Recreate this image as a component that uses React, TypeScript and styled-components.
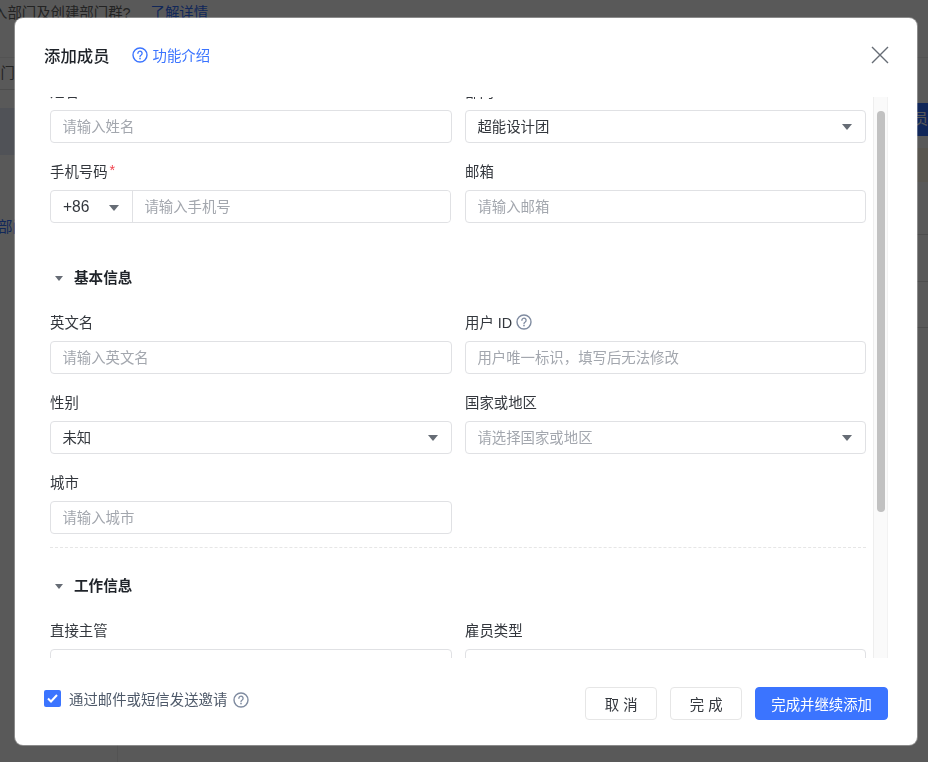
import React from 'react';
import styled, {createGlobalStyle} from 'styled-components';

const GlobalStyle = createGlobalStyle`
  html, body {
    margin: 0;
    padding: 0;
    height: 100%;
    overflow: hidden;
    font-family: "Liberation Sans", "Noto Sans CJK SC", sans-serif;
    font-size: 14.4px;
    color: #333;
  }
  * { box-sizing: border-box; }
`;

/* the page behind the dialog */
const Page = styled.div`
  height: 100vh;
  overflow: hidden;
  background: white;
  color: #666;
  display: flex;
  flex-direction: column;
`;
const Notice = styled.div`
  flex: none;
  height: 58px;
  padding: 3px 0 0 0;
  margin-left: -7px;
  line-height: 20px;
  border-bottom: 1px solid #eee;
  display: flex;
  gap: 20px;
  white-space: nowrap;
  > a { color: #3370ff; }
`;
const PageBody = styled.div`
  flex: 1;
  display: flex;
  min-height: 0;
`;
const Sidebar = styled.div`
  flex: none;
  width: 118px;
  border-right: 1px solid #eee;
`;
const SideSearch = styled.div`
  height: 32px;
  line-height: 31px;
  margin-left: -14px;
  border-bottom: 1px solid #ddd;
`;
const SideActive = styled.div`
  height: 47px;
  margin-top: 18px;
  background: #e6ecfa;
`;
const SideLink = styled.div`
  margin: 62px 0 0 -2px;
  line-height: 20px;
  color: #3370ff;
`;
const MainPane = styled.div`
  flex: 1;
  display: flex;
  flex-direction: column;
`;
const AddButton = styled.div`
  align-self: flex-end;
  margin-top: 45px;
  height: 33px;
  width: 90px;
  line-height: 33px;
  text-align: right;
  background: #3370ff;
  color: white;
`;
const Banner = styled.div`
  height: 34px;
  margin-top: 12px;
  background: #fff6e5;
`;
const TableRow = styled.div<{$h: number}>`
  height: ${p => p.$h}px;
  border-bottom: 1px solid #ddd;
`;

/* dialog */
const Mask = styled.div`
  position: fixed;
  inset: 0;
  background: rgba(0, 0, 0, .65);
  padding: 18px 0 0 15px;
`;
const Dialog = styled.div`
  width: 902px;
  height: 727px;
  background: white;
  border-radius: 8px;
  box-shadow: 0 0 0 1px rgba(255, 255, 255, .3);
  display: flex;
  flex-direction: column;
`;
const Header = styled.div`
  flex: none;
  height: 79px;
  padding: 0 28px 6px 29px;
  display: flex;
  align-items: center;
`;
const Title = styled.h3`
  margin: 0;
  font-size: 16.4px;
  font-weight: 500;
  color: #1f2329;
`;
const Intro = styled.a`
  margin-left: 22px;
  display: flex;
  align-items: center;
  gap: 5px;
  color: #3b74ff;
`;
const CloseButton = styled.button`
  margin-left: auto;
  padding: 0;
  border: none;
  background: none;
  display: flex;
  color: #666c75;
`;
const Scroller = styled.div`
  flex: none;
  height: 561px;
  margin: 0 29px 0 35px;
  display: flex;
  overflow: hidden;
`;
const Content = styled.div`
  width: 816px;
  margin-top: -16px;
`;
const Track = styled.div`
  flex: none;
  width: 15px;
  margin-left: 7px;
  background: #fafafa;
  border-left: 1px solid #eee;
  border-right: 1px solid #f2f2f2;
  padding: 14px 0 0 3px;
`;
const Thumb = styled.div`
  width: 8px;
  height: 401px;
  border-radius: 4px;
  background: #c1c1c1;
`;
const FormGrid = styled.div`
  display: grid;
  grid-template-columns: 402px 401px;
  column-gap: 13px;
  row-gap: 18px;
`;
const Field = styled.div``;
const Label = styled.label`
  height: 20px;
  margin-bottom: 9px;
  padding-top: 2px;
  display: flex;
  align-items: center;
  gap: 4px;
  line-height: 18px;
  color: #33373d;
  > em {
    margin: -5px 0 0 -2px;
    font-style: normal;
    color: #f0414c;
  }
`;
const LabelHelp = styled.span`
  display: flex;
  margin-top: -2px;
`;
const TextInput = styled.input`
  display: block;
  width: 100%;
  height: 33px;
  padding: 0 11.4px;
  border: 1px solid #e0e1e4;
  border-radius: 4px;
  outline: none;
  font: inherit;
  color: #33373d;
  &::placeholder { color: #a3a7ae; }
`;
const Select = styled.div`
  height: 33px;
  padding: 0 13px 2px 11.4px;
  border: 1px solid #e0e1e4;
  border-radius: 4px;
  display: flex;
  align-items: center;
  justify-content: space-between;
  color: #33373d;
`;
const Placeholder = styled.span`
  color: #a3a7ae;
`;
const Caret = styled.i<{$w?: number}>`
  flex: none;
  width: 0;
  height: 0;
  margin-top: 2px;
  border-top: 6px solid #666c75;
  border-left: ${p => p.$w ?? 5.5}px solid transparent;
  border-right: ${p => p.$w ?? 5.5}px solid transparent;
`;
const PhoneBox = styled.div`
  width: 401px;
  height: 33px;
  border: 1px solid #e0e1e4;
  border-radius: 4px;
  display: flex;
`;
const PhonePrefix = styled.div`
  flex: none;
  width: 82px;
  padding: 0 13px 0 12px;
  border-right: 1px solid #e0e1e4;
  display: flex;
  align-items: center;
  justify-content: space-between;
  font-size: 15.6px;
  color: #33373d;
`;
const PhoneInput = styled(TextInput)`
  flex: 1;
  width: auto;
  height: 31px;
  border: none;
`;
const SectionTitle = styled.div<{$top: number}>`
  height: 20px;
  margin: ${p => p.$top}px 0 24px;
  padding-left: 5px;
  display: flex;
  align-items: center;
  gap: 11px;
  line-height: 20px;
  font-size: 14.6px;
  font-weight: 600;
  color: #1f2329;
`;
const SectionCaret = styled(Caret)`
  margin-top: 0;
  border-top-width: 5px;
`;
const Divider = styled.div`
  margin-top: 13px;
  border-top: 1px dashed #e6e6e6;
`;
const Footer = styled.div`
  flex: 1;
  padding: 29px 29px 0;
  display: flex;
  align-items: flex-start;
`;
const Invite = styled.div`
  margin-top: 1px;
  height: 21px;
  display: flex;
  align-items: center;
  color: #4e5969;
`;
const Checkbox = styled.span`
  width: 17px;
  height: 17px;
  margin-right: 8px;
  border-radius: 2px;
  background: #3b74ff;
  display: flex;
  align-items: center;
  justify-content: center;
`;
const InviteHelp = styled.span`
  display: flex;
  margin: 2px 0 0 6px;
`;
const Actions = styled.div`
  margin-left: auto;
  display: flex;
  gap: 13px;
`;
const Button = styled.button<{$primary?: boolean}>`
  height: 33px;
  min-width: 72px;
  padding: 0 15px;
  border: 1px solid ${p => p.$primary ? '#3b74ff' : '#e6e6e6'};
  border-radius: 4px;
  background: ${p => p.$primary ? '#3b74ff' : 'white'};
  color: ${p => p.$primary ? 'white' : '#33373d'};
  font: inherit;
`;

function HelpIcon({color, size = 16}: { color: string, size?: number }) {
  return (
    <svg width={size} height={size} viewBox="0 0 16 16" fill="none" stroke={color}>
      <circle cx="8" cy="8" r="7" strokeWidth="1.4"/>
      <path d="M5.9 6.3a2.1 2.1 0 1 1 3.3 1.7c-.8.5-1.2.9-1.2 1.7" strokeWidth="1.3" strokeLinecap="round"/>
      <circle cx="8" cy="11.6" r=".85" fill={color} stroke="none"/>
    </svg>
  );
}

function Input({label, placeholder}: { label: string, placeholder?: string }) {
  return (
    <Field>
      <Label>{label}</Label>
      <TextInput placeholder={placeholder}/>
    </Field>
  );
}

function App() {
  return (
    <>
      <GlobalStyle/>
      <Page>
        <Notice>
          <span>入部门及创建部门群?</span>
          <a>了解详情</a>
        </Notice>
        <PageBody>
          <Sidebar>
            <SideSearch>部门</SideSearch>
            <SideActive/>
            <SideLink>部门</SideLink>
          </Sidebar>
          <MainPane>
            <AddButton>添加成员</AddButton>
            <Banner/>
            <TableRow $h={53}/>
            <TableRow $h={47}/>
            <TableRow $h={46}/>
          </MainPane>
        </PageBody>
      </Page>
      <Mask>
        <Dialog>
          <Header>
            <Title>添加成员</Title>
            <Intro><HelpIcon color="#3b74ff"/>功能介绍</Intro>
            <CloseButton>
              <svg width="18" height="18" viewBox="0 0 18 18" fill="none" stroke="currentColor" strokeWidth="1.4">
                <path d="M1 1l16 16M17 1L1 17"/>
              </svg>
            </CloseButton>
          </Header>
          <Scroller>
            <Content>
              <FormGrid>
                <Input label="姓名" placeholder="请输入姓名"/>
                <Field>
                  <Label>部门</Label>
                  <Select>超能设计团<Caret/></Select>
                </Field>
                <Field>
                  <Label>手机号码<em>*</em></Label>
                  <PhoneBox>
                    <PhonePrefix>+86<Caret/></PhonePrefix>
                    <PhoneInput placeholder="请输入手机号"/>
                  </PhoneBox>
                </Field>
                <Input label="邮箱" placeholder="请输入邮箱"/>
              </FormGrid>

              <SectionTitle $top={45}><SectionCaret $w={4.5}/>基本信息</SectionTitle>
              <FormGrid>
                <Input label="英文名" placeholder="请输入英文名"/>
                <Field>
                  <Label>用户 ID <LabelHelp><HelpIcon color="#7f8ba0"/></LabelHelp></Label>
                  <TextInput placeholder="用户唯一标识，填写后无法修改"/>
                </Field>
                <Field>
                  <Label>性别</Label>
                  <Select>未知<Caret/></Select>
                </Field>
                <Field>
                  <Label>国家或地区</Label>
                  <Select><Placeholder>请选择国家或地区</Placeholder><Caret/></Select>
                </Field>
                <Input label="城市" placeholder="请输入城市"/>
              </FormGrid>
              <Divider/>

              <SectionTitle $top={28}><SectionCaret $w={4.5}/>工作信息</SectionTitle>
              <FormGrid>
                <Input label="直接主管"/>
                <Input label="雇员类型"/>
              </FormGrid>
            </Content>
            <Track><Thumb/></Track>
          </Scroller>
          <Footer>
            <Invite>
              <Checkbox>
                <svg width="11" height="9" viewBox="0 0 11 9" fill="none" stroke="white" strokeWidth="2">
                  <path d="M1 4.5l3 3 6-6.5"/>
                </svg>
              </Checkbox>
              通过邮件或短信发送邀请
              <InviteHelp><HelpIcon color="#7f8ba0"/></InviteHelp>
            </Invite>
            <Actions>
              <Button>取 消</Button>
              <Button>完 成</Button>
              <Button $primary>完成并继续添加</Button>
            </Actions>
          </Footer>
        </Dialog>
      </Mask>
    </>
  );
}

export default App;
